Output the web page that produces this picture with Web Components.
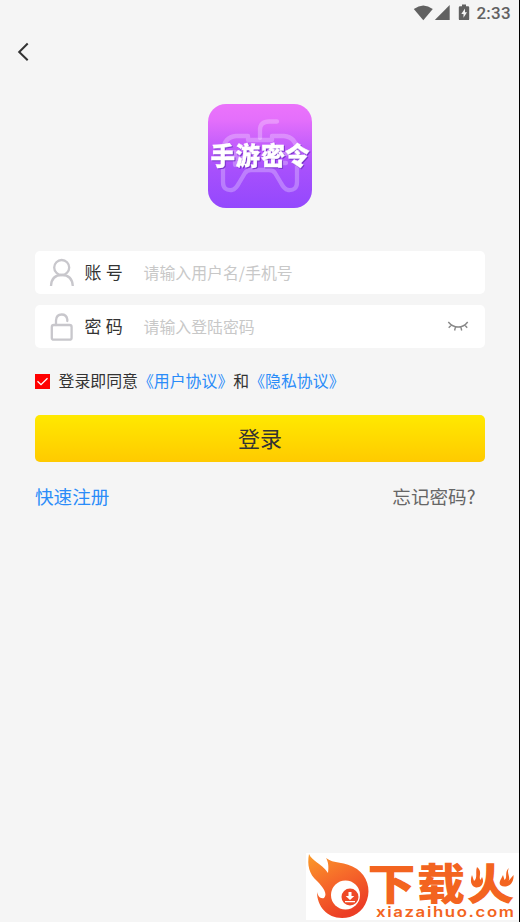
<!DOCTYPE html>
<html lang="zh-CN">
<head>
<meta charset="utf-8">
<title>登录</title>
<style>
html,body{margin:0;height:100%;background:#f5f5f5}
body{font-family:"Noto Sans CJK SC",sans-serif;overflow:hidden}
</style>
</head>
<body>
<login-screen></login-screen>
<script>
const define=(name,html)=>customElements.define(name,class extends HTMLElement{
  constructor(){
    super();
    const t=document.createElement('template');
    t.innerHTML=html;
    this.attachShadow({mode:'open'}).append(t.content.cloneNode(true));
  }
});

define('status-bar',`<style>
:host{display:flex;height:26px;justify-content:flex-end;box-sizing:border-box;padding-right:8px;color:#616161;font:500 17px/27px Roboto,sans-serif}
svg{display:block;width:62px;height:26px}
span{width:34.500px;white-space:nowrap;letter-spacing:.2px}
</style>
<svg viewBox="414.500 0 62 26" overflow="visible" fill="#616161"><path d="M413.300 9Q422.800 1.800 432.300 9L422.800 20.200Z"/><path d="M449.200 5V20H434.300Z"/><path fill-rule="evenodd" d="M461.500 4.500h4v1.700h2q1.200 0 1.200 1.200v11.500q0 1.200-1.200 1.200h-8q-1.200 0-1.200-1.200V7.400q0-1.200 1.200-1.200h2ZM464.500 8.500L460.800 14H463V17.800L466.500 12.300H464.500Z"/></svg><span>2:33</span>`);

define('nav-bar',`<style>
:host{display:block;height:52px}
svg{display:block}
</style><svg width="60" height="52" viewBox="0 26 60 52" fill="none" stroke="#333" stroke-width="2"><path d="M27.700 43.500L19.200 52l8.500 8.300"/></svg>`);

define('app-logo',`<style>
:host{display:block;width:104px;height:104px}
svg{display:block}
text{font:900 24.500px "Noto Sans CJK SC",sans-serif;fill:#fff;stroke:#fff;stroke-width:.3px;filter:drop-shadow(1px 1px 0 #7835c9)}
</style><svg width="104" height="104" viewBox="0 0 104 104">
<defs><linearGradient id="g" x2="0" y2="1"><stop stop-color="#eb73fb"/><stop offset=".15" stop-color="#e46ffb"/><stop offset=".6" stop-color="#a951fc"/><stop offset="1" stop-color="#9448fd"/></linearGradient></defs>
<rect width="104" height="104" rx="18" fill="url(#g)"/>
<g fill="none" stroke="#fff" stroke-opacity=".27" stroke-width="4.300" stroke-linecap="round" stroke-linejoin="round"><path d="M52 34V26Q52 17.500 61 17.500H69"/><path d="M40 36V32H28Q16 33 15 47V78Q15 87 24 86Q28 85 31 79L37 69Q39 66 43 66H61Q65 66 67 69L73 79Q76 85 80 86Q89 87 89 78V47Q88 33 76 32H64V36Z"/><path d="M27 48V61M20 54H34M74 50H78M74 59H78"/></g>
<text x="2.500 27.500 52.700 77" y="61">手游密令</text>
</svg>`);

define('form-field',`<style>
:host{display:flex;align-items:center;height:43px;border-radius:5px;background:#fff;box-sizing:border-box;padding-left:14px;padding-right:16px}
.icon{width:26px;height:30px;display:block}
.label{margin-left:9.500px;width:59px;font-size:17px;line-height:25px;color:#333;white-space:pre;word-spacing:.5px;padding-bottom:2px}
.hint{font-size:15.900px;line-height:24px;color:#c8c8c8;flex:1;padding-top:1px;white-space:nowrap}
</style><div class="icon"><slot name="icon"></slot></div><div class="label"><slot name="label"></slot></div><div class="hint"><slot></slot></div><slot name="end"></slot>`);

define('user-icon',`<style>:host,svg{display:block}</style><svg width="26" height="30" viewBox="0 0 26 30" fill="none" stroke="#c8c7cc" stroke-width="2.300"><circle cx="12.700" cy="9.500" r="7.500"/><path d="M2 28Q2.500 17 12.800 17T23.800 28"/></svg>`);
define('lock-icon',`<style>:host,svg{display:block}</style><svg width="26" height="30" viewBox="0 0 26 30" fill="none" stroke="#c8c7cc" stroke-width="2.300"><rect x="2.800" y="13" width="19.800" height="14.700" rx="2"/><path d="M7 13V8.500Q7.300 2.500 12.700 2.500Q17.500 2.500 18.300 7.500V9" stroke-linecap="round"/></svg>`);
define('eye-icon',`<style>:host{display:block;padding-bottom:1px}svg{display:block}</style><svg width="22" height="14" viewBox="0 0 22 14" fill="none" stroke="#888" stroke-width="1.400"><path d="M1.300 3Q5.500 8 11.200 8T20.700 3M4.500 6L1.700 8.700M8.500 7.800L7.600 11.500M13.800 7.800L14.700 11.500M17.700 6L20.200 8.700"/></svg>`);

define('agreement-row',`<style>
:host{display:flex;align-items:center;height:24px;font-size:15.900px;line-height:24px;color:#333;white-space:nowrap}
svg{display:block;margin-right:8.500px}
a{color:#2a8cf9}
</style><svg width="15" height="15"><rect width="15" height="15" fill="#f00"/><path d="M2.500 7.300L6 10.700L12.500 4.300" fill="none" stroke="#fff" stroke-width="1.300"/></svg><span>登录即同意<a>《用户协议》</a>和<a>《隐私协议》</a></span>`);

define('login-button',`<style>
:host{display:flex;align-items:center;justify-content:center;height:47px;box-sizing:border-box;padding-bottom:4px;border-radius:5px;background:linear-gradient(#ffe900,#ffca00);color:#333;font-size:22px;line-height:32px}
</style><span><slot></slot></span>`);

define('link-row',`<style>
:host{display:flex;justify-content:space-between;font-size:18.600px;line-height:28px;color:#666;padding-right:9.500px}
.a{color:#2a8cf9}
</style><span class="a"><slot name="left"></slot></span><span><slot name="right"></slot></span>`);

define('site-mark',`<style>
:host{display:block;width:213px;height:67px;background:#fff}
svg{display:block}
.t{font:900 48px "Noto Sans CJK SC",sans-serif}
.u{font:600 14px Inter,sans-serif}
</style><svg width="213" height="67" viewBox="306 853 213 67">
<defs><linearGradient id="f" x2=".5" y2="1"><stop stop-color="#fb9b28"/><stop offset=".5" stop-color="#f6692a"/><stop offset="1" stop-color="#ec3e25"/></linearGradient></defs>
<path fill="url(#f)" d="M309 854C312 861 321 863 328 873C329 866 328 861 326 858C333 864 345 861 357 869C367 876 371 889 367 900C363 912 353 918 342 918C327 918 317 906 317 892C318 896 320 899 324 898C328 894 323 887 317 881C309 874 307 865 309 854Z"/>
<circle cx="345.500" cy="895" r="14.500" fill="#fff"/><circle cx="350" cy="897" r="8.500" fill="#ee4826"/>
<path d="M348.500 892h3v4h2.800l-4.300 4-4.300-4h2.800ZM345 901h10v1.300h-10Z" fill="#fff"/>
<text class="t" fill="#f36420" transform="translate(367.500 900) scale(1 .9)" textLength="147">下载火</text>
<path fill="#fff" d="M467 860H484.500L483 885L467 895ZM496.500 860H518V893L496 883Z"/>
<path fill="#f36420" d="M477 867C483 872 478 876 480.500 880L482 877C485 883 481 888 476 887.500C470.500 886 470 880 472 875L474 881C478 878 475 872 477 867ZM509 868C506 873 511 877 508.500 881L513.500 875C514 881 511 886 506 886.500C500 887 498 884 501 879L503 875L504.500 880C508 878 504 872 509 868Z"/>
<text class="u" transform="translate(376 917) scale(1.200 1)" fill="#f36420" textLength="115">xiazaihuo.com</text>
</svg>`);

define('login-screen',`<style>
:host{display:flex;flex-direction:column;height:922px;box-sizing:border-box;border-right:1px solid #000;background:#f5f5f5}
main{padding:26px 34px 0 35px;display:flex;flex-direction:column}
app-logo{align-self:center}
form-field{margin-bottom:11px}
form-field:first-of-type{margin-top:43px}
agreement-row{margin-top:10px;margin-bottom:22px}
link-row{margin-top:20px}
site-mark{align-self:flex-end;margin-top:auto;margin-bottom:2px}
</style>
<status-bar></status-bar><nav-bar></nav-bar>
<main><app-logo></app-logo>
<form-field><user-icon slot="icon"></user-icon><span slot="label">账 号</span>请输入用户名/手机号</form-field>
<form-field><lock-icon slot="icon"></lock-icon><span slot="label">密 码</span>请输入登陆密码<eye-icon slot="end"></eye-icon></form-field>
<agreement-row></agreement-row>
<login-button>登录</login-button>
<link-row><span slot="left">快速注册</span><span slot="right">忘记密码?</span></link-row></main>
<site-mark></site-mark>`);
</script>
</body>
</html>
